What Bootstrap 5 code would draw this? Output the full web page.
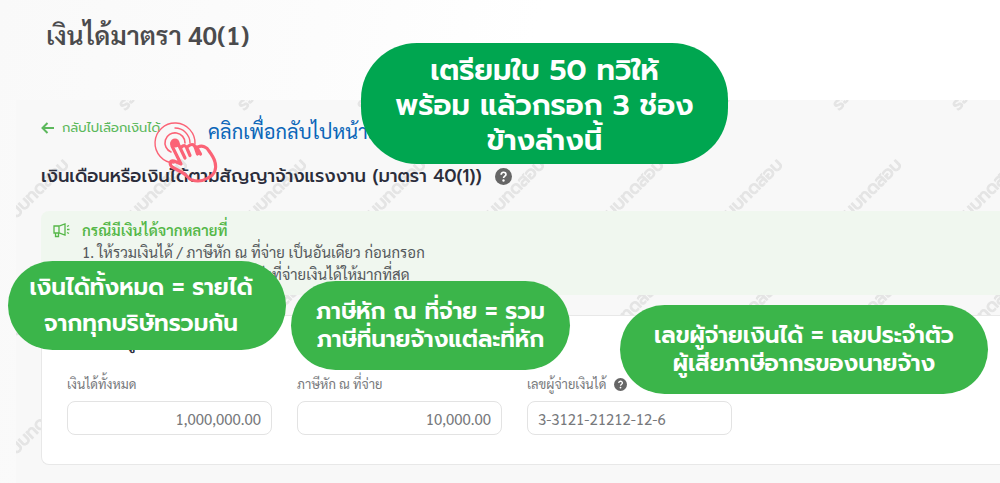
<!doctype html>
<html lang="th">
<head>
<meta charset="utf-8">
<meta name="viewport" content="width=device-width, initial-scale=1">
<title>เงินได้มาตรา 40(1)</title>
<link href="https://cdn.jsdelivr.net/npm/bootstrap@5.3.0/dist/css/bootstrap.min.css" rel="stylesheet">
<style>
  body { font-family: Sarabun, "Liberation Sans", sans-serif; background: linear-gradient(100deg, #f9f9f9 0, #fcfcfc 30%, #fff 50%); color: #55595c; min-height: 100vh; overflow-x: hidden; }
  .page-title { font-size: 26px; line-height: 36px; font-weight: 600; color: #4b4b4d; padding: 16px 0 48px 46px; }
  .panel { background: #f8f8f8; margin-left: 16px; padding: 16px 0 18px 25px; isolation: isolate; }
  .watermark { inset: 0; z-index: -1; font-family: Prompt, sans-serif; font-size: 17px; }
  .back-row { height: 24px; }
  .back-link { font-family: Prompt, sans-serif; font-size: 13px; color: #5cb85c; gap: 8px; }
  .hint { left: 192px; top: 16px; font-size: 20px; line-height: 30px; color: #0b66b8; }
  .tap { left: 137px; top: 20px; }
  .section-title { font-family: Prompt, sans-serif; font-size: 18px; line-height: 28px; font-weight: 500; color: #2b2d3b; margin-top: 22px; gap: 13px; }
  .notice { background: #f0f7ef; border-radius: 8px 0 0 8px; margin-top: 21px; padding: 8px 12px; min-height: 84px; gap: 12px; font-size: 15px; line-height: 22px; }
  .notice-title { font-size: 15px; line-height: 22px; font-weight: 600; color: #55b748; }
  .entry { background: #fff; border: 1px solid #e8e8e8; border-right: 0; border-radius: 8px 0 0 8px; margin-top: 20px; padding: 16px 25px 29px; }
  .entry-title { font-family: Prompt, sans-serif; font-size: 16px; line-height: 24px; font-weight: 500; color: #2b2d3b; }
  .fields { gap: 25px; margin-top: 16px; }
  .field { width: 205px; }
  .field-label { font-size: 13px; line-height: 24px; color: #77797c; gap: 8px; margin-bottom: 5px; }
  .field-box { height: 34px; border: 1px solid #e3e3e3; border-radius: 8px; padding: 0 10px; font-size: 15px; color: #77797c; }
  .callout { font-family: Prompt, sans-serif; font-weight: 600; color: #fff; background: #3bb54a; border-radius: 45px; font-size: 23px; line-height: 28px; z-index: 2; white-space: nowrap; }
  .callout-main { background: #00a650; border-radius: 56px; font-size: 29px; line-height: 35px; left: 361px; top: 43px; width: 367px; height: 121px; padding-top: 4px; }
  .callout-income { left: 8px; top: 261px; width: 278px; height: 89px; line-height: 36px; padding-right: 12px; }
  .callout-tax { left: 291px; top: 281px; width: 279px; height: 89px; }
  .callout-payer { left: 620px; top: 305px; width: 368px; height: 89px; }
</style>
</head>
<body>
<main class="position-relative">
  <h1 class="page-title m-0">เงินได้มาตรา 40(1)</h1>

  <section class="panel position-relative">
    <svg class="watermark position-absolute w-100 h-100" aria-hidden="true">
      <defs>
        <pattern id="wm" width="119" height="118" patternUnits="userSpaceOnUse" x="-17" y="12">
          <text transform="translate(7 117) rotate(-45)" fill="#e4e4e4" stroke="#e4e4e4" stroke-width="1">ระบบทดสอบ</text>
        </pattern>
      </defs>
      <rect width="100%" height="100%" fill="url(#wm)"/>
    </svg>

    <div class="back-row d-flex align-items-center">
      <a class="back-link d-inline-flex align-items-center text-decoration-none" href="#">
        <svg width="13" height="12" viewBox="0 0 13 12" fill="none" stroke="currentColor" stroke-width="2"><path d="M6.5 1 1.5 6l5 5M1.5 6H13"/></svg>
        กลับไปเลือกเงินได้
      </a>
    </div>
    <div class="hint position-absolute text-nowrap">คลิกเพื่อกลับไปหน้าแรก</div>

    <h2 class="section-title d-flex align-items-center mb-0">
      <span>เงินเดือนหรือเงินได้ตามสัญญาจ้างแรงงาน (มาตรา 40(1))</span>
      <svg width="17" height="17" viewBox="0 0 16 16" role="img" aria-label="ช่วยเหลือ"><circle cx="8" cy="8" r="8" fill="#666"/><path d="M5.800 6.300c0-3 4.500-3 4.500-.3 0 1.700-2.200 1.700-2.200 3.400" fill="none" stroke="#fff" stroke-width="1.600"/><circle cx="8" cy="11.800" r="1.100" fill="#fff"/></svg>
    </h2>
    <svg class="tap position-absolute" width="66" height="66" viewBox="0 0 66 66" fill="none" stroke="#fb6376" stroke-linecap="round" stroke-linejoin="round" aria-hidden="true">
      <circle cx="22" cy="23" r="4.500" fill="#fb6376" stroke="none"/>
      <path stroke-width="1.400" d="M21 43A20 20 0 1 1 42 24M22 8a15 15 0 0 1 15 15"/>
      <path stroke-width="1.600" d="M18 32A10 10 0 1 1 32 23"/>
      <path stroke-width="3.200" d="M32 38 25 23.500C23 19.500 17 21 19 26l9 18-7-3c-4-1-5 3-2 6l11 6c4 2 5 6 9 7 6 2 11 1 16-2 6-3 9-9 7-16-1-4-3-7-6-11-2-4-7-6-11-4M28 27.500c3-3 5-2 6 1l3 7M35.500 26c4-3 6-1 7 2l2 6M43.500 27l4 7"/>
    </svg>

    <div class="notice d-flex align-items-start">
      <svg class="flex-shrink-0 mt-1" width="17" height="15" viewBox="0 0 17 15" fill="none" stroke="#55b748" stroke-width="1.300"><path d="M1 3h5l6-2v11L6 10H1zM6 3v7M2.500 10v3.500h3V10M14 3.500l2-1M14 6.500h2.500M14 9.500l2 1"/></svg>
      <div>
        <h3 class="notice-title m-0">กรณีมีเงินได้จากหลายที่</h3>
        <div>1. ให้รวมเงินได้ / ภาษีหัก ณ ที่จ่าย เป็นอันเดียว ก่อนกรอก</div>
        <div>2. กรอกเลขผู้จ่ายเงินได้ของแห่งที่จ่ายเงินได้ให้มากที่สุด</div>
      </div>
    </div>

    <form class="entry">
      <h3 class="entry-title m-0">กรอกข้อมูล</h3>
      <div class="fields d-flex flex-wrap">
        <div class="field">
          <label class="field-label d-flex align-items-center" for="income">เงินได้ทั้งหมด</label>
          <input class="field-box form-control text-end" id="income" value="1,000,000.00">
        </div>
        <div class="field">
          <label class="field-label d-flex align-items-center" for="tax">ภาษีหัก ณ ที่จ่าย</label>
          <input class="field-box form-control text-end" id="tax" value="10,000.00">
        </div>
        <div class="field">
          <label class="field-label d-flex align-items-center" for="payer">เลขผู้จ่ายเงินได้
            <svg width="13" height="13" viewBox="0 0 16 16" aria-hidden="true"><circle cx="8" cy="8" r="8" fill="#666"/><path d="M5.800 6.300c0-3 4.500-3 4.500-.3 0 1.700-2.200 1.700-2.200 3.400" fill="none" stroke="#fff" stroke-width="1.600"/><circle cx="8" cy="11.800" r="1.100" fill="#fff"/></svg>
          </label>
          <input class="field-box form-control" id="payer" value="3-3121-21212-12-6">
        </div>
      </div>
    </form>
  </section>

  <div class="callout callout-main position-absolute d-flex align-items-center justify-content-center text-center">เตรียมใบ 50 ทวิให้<br>พร้อม แล้วกรอก 3 ช่อง<br>ข้างล่างนี้</div>
  <div class="callout callout-income position-absolute d-flex align-items-center justify-content-center text-center">เงินได้ทั้งหมด = รายได้<br>จากทุกบริษัทรวมกัน</div>
  <div class="callout callout-tax position-absolute d-flex align-items-center justify-content-center text-center">ภาษีหัก ณ ที่จ่าย = รวม<br>ภาษีที่นายจ้างแต่ละที่หัก</div>
  <div class="callout callout-payer position-absolute d-flex align-items-center justify-content-center text-center">เลขผู้จ่ายเงินได้ = เลขประจำตัว<br>ผู้เสียภาษีอากรของนายจ้าง</div>
</main>
<script src="https://cdn.jsdelivr.net/npm/bootstrap@5.3.0/dist/js/bootstrap.bundle.min.js"></script>
</body>
</html>
